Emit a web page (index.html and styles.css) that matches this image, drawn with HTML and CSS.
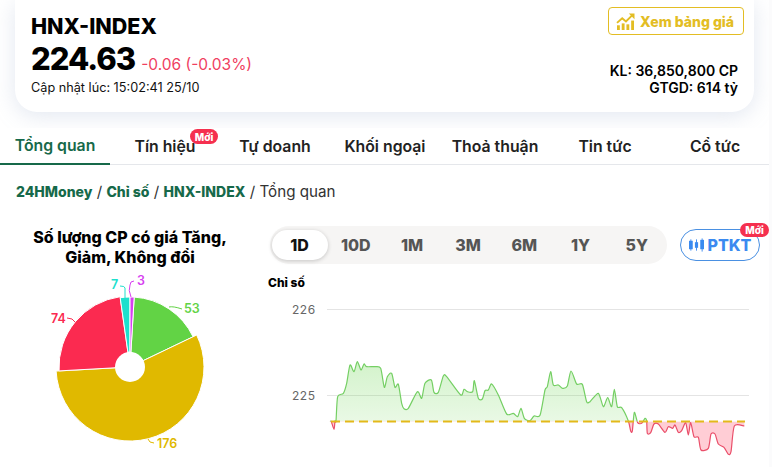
FILE: index.html
```html
<!DOCTYPE html>
<html lang="vi">
<head>
  <meta charset="UTF-8" />
  <title>HNX-INDEX - Tổng quan</title>
  <link rel="stylesheet" href="styles.css">
</head>
<body>
  <div class="page">
    <header class="top">
      <div class="card">
        <div class="card-left">
          <h1 class="symbol">HNX-INDEX</h1>
          <div class="price-row">
            <span class="price">224.63</span>
            <span class="change">-0.06 (-0.03%)</span>
          </div>
          <div class="updated">Cập nhật lúc: 15:02:41 25/10</div>
        </div>
        <div class="card-right">
          <a class="board-btn" href="#">
            <svg class="board-icon" viewBox="0 0 20 18" width="19" height="17">
              <rect x="1" y="13" width="3" height="5" />
              <rect x="6" y="11" width="3" height="7" />
              <rect x="11" y="12" width="3" height="6" />
              <rect x="16" y="8" width="3" height="10" />
              <path d="M1 10.5 L6.5 5.5 L10.5 9 L17 2.5" fill="none" stroke-width="2" />
              <path d="M13.5 0.5 H19.5 V6.5 Z" />
            </svg>
            Xem bảng giá
          </a>
          <div class="stats">
            <div>KL: 36,850,800 CP</div>
            <div>GTGD: 614 tỷ</div>
          </div>
        </div>
      </div>
    </header>

    <nav class="tabs">
      <a class="tab active" href="#">Tổng quan</a>
      <a class="tab" href="#">Tín hiệu<span class="badge badge-tab">Mới</span></a>
      <a class="tab" href="#">Tự doanh</a>
      <a class="tab" href="#">Khối ngoại</a>
      <a class="tab" href="#">Thoả thuận</a>
      <a class="tab" href="#">Tin tức</a>
      <a class="tab" href="#">Cổ tức</a>
    </nav>

    <div class="breadcrumb">
      <a href="#">24HMoney</a> / <a href="#">Chỉ số</a> / <a href="#">HNX-INDEX</a> / <span>Tổng quan</span>
    </div>

    <section class="content">
      <div class="pie-box">
        <h2 class="pie-title">Số lượng CP có giá Tăng, Giảm, Không đổi</h2>
        <svg class="pie" viewBox="0 268 260 199" width="260" height="199">
          <g stroke="#fff" stroke-width="1">
            <path fill="#62d345" d="M130.9 352 L134.2 297.1 A70 70 0 0 1 193.1 336.8 L143.5 360.5 Z" />
            <path fill="#e0b900" d="M143.5 360.5 L196.7 335 A74 74 0 1 1 56.1 371.1 L115 367.8 Z" />
            <path fill="#fb2a50" d="M115 367.8 L59.1 370.9 A71 71 0 0 1 120.1 296.7 L127.9 352.1 Z" />
            <path fill="#1de0cd" d="M127.9 352.1 L120.2 297.7 A70 70 0 0 1 130 297 V352 Z" />
            <path fill="#d63ff0" d="M130 352 V297 A70 70 0 0 1 134.2 297.1 L130.9 352 Z" />
          </g>
          <circle cx="130" cy="367" r="15" fill="#fff" />
          <g fill="none" stroke-width="1">
            <path stroke="#62d345" d="M169 307 Q173 306 182 309" />
            <path stroke="#e0b900" d="M148 439 Q149 443 154 443" />
            <path stroke="#fb2a50" d="M75 322 Q73 318 67 318" />
            <path stroke="#1de0cd" d="M125 298 V288 Q125 286 120 286" />
            <path stroke="#d63ff0" d="M131 297 Q128 290 130 285 Q130 281 134 281" />
          </g>
          <g class="pie-labels">
            <text x="184" y="313" fill="#62d345">53</text>
            <text x="157" y="448" fill="#e0b900">176</text>
            <text x="51" y="323" fill="#fb2a50">74</text>
            <text x="111" y="289" fill="#1de0cd">7</text>
            <text x="137" y="285" fill="#d63ff0">3</text>
          </g>
        </svg>
      </div>

      <div class="chart-box">
        <div class="chart-head">
          <div class="ranges">
            <button class="range active">1D</button>
            <button class="range">10D</button>
            <button class="range">1M</button>
            <button class="range">3M</button>
            <button class="range">6M</button>
            <button class="range">1Y</button>
            <button class="range">5Y</button>
          </div>
          <a class="ptkt" href="#">
            <svg viewBox="0 0 16 14" width="15" height="14" fill="#3b8af0">
              <rect x="0" y="2.5" width="4" height="9" />
              <rect x="1.5" y="1" width="1" height="12" />
              <rect x="6.3" y="4" width="3.4" height="6" />
              <rect x="7.5" y="1" width="1" height="12" />
              <rect x="12" y="1.5" width="4" height="10" />
              <rect x="13.5" y="0" width="1" height="14" />
            </svg>
            PTKT
            <span class="badge badge-ptkt">Mới</span>
          </a>
        </div>
        <div class="chart-title">Chỉ số</div>
        <svg class="chart" viewBox="268 295 502 172" width="502" height="172">
          <defs>
            <linearGradient id="upFill" x1="0" y1="0" x2="0" y2="1">
              <stop offset="0" stop-color="#62d345" stop-opacity="0.28" />
              <stop offset="1" stop-color="#62d345" stop-opacity="0.06" />
            </linearGradient>
            <clipPath id="above"><rect x="268" y="295" width="502" height="126.5" /></clipPath>
            <clipPath id="below"><rect x="268" y="421.5" width="502" height="46" /></clipPath>
          </defs>
          <g class="grid">
            <line x1="327" y1="309.5" x2="749" y2="309.5" />
            <line x1="327" y1="395.5" x2="749" y2="395.5" />
          </g>
          <g class="axis">
            <text x="292" y="314">226</text>
            <text x="292" y="400">225</text>
          </g>
          <path id="areaUp" fill="url(#upFill)" clip-path="url(#above)" />
          <path id="areaDown" fill="#ffc4ce" fill-opacity="0.85" clip-path="url(#below)" />
          <path id="lineUp" class="line" stroke="#74cf63" clip-path="url(#above)" />
          <path id="lineDown" class="line" stroke="#ea4f6a" clip-path="url(#below)" />
          <line class="base" x1="331" y1="421.5" x2="745" y2="421.5" />
        </svg>
      </div>
    </section>
  </div>
  <script src="script.js"></script>
</body>
</html>
```

FILE: styles.css
```css
* {
    margin: 0;
    padding: 0;
    box-sizing: border-box;
}

html, body {
    height: 467px;
    overflow: hidden;
}

body {
    font-family: 'Inter', 'Liberation Sans', sans-serif;
    background: #fbfbfc;
    color: #000;
}

a {
    color: inherit;
    text-decoration: none;
}

.page {
    width: 769px;
    height: 467px;
    background: #fff;
    overflow: hidden;
}

.top {
    height: 128px;
    padding: 0 15px;
    overflow: hidden;
}

.card {
    display: flex;
    justify-content: space-between;
    height: 112px;
    padding: 13px 16px 0;
    background: #fff;
    border-radius: 0 0 22px 22px;
    box-shadow: 0 4px 22px rgba(150, 170, 200, 0.28);
}

.symbol {
    font-size: 21.5px;
    line-height: 27px;
    font-weight: 800;
}

.price-row {
    display: flex;
    align-items: baseline;
    gap: 6px;
    margin-top: 1px;
}

.price {
    font-size: 31px;
    line-height: 36px;
    font-weight: 800;
    letter-spacing: -1px;
}

.change {
    font-size: 15.5px;
    color: #f0405f;
}

.updated {
    margin-top: 3px;
    font-size: 12.7px;
    line-height: 16px;
    color: #111;
}

.card-right {
    display: flex;
    flex-direction: column;
    align-items: flex-end;
    margin-top: -6px;
}

.board-btn {
    display: flex;
    align-items: center;
    gap: 5px;
    width: 136px;
    height: 28px;
    margin-right: -6px;
    padding-left: 7px;
    border: 1px solid #e3bd23;
    border-radius: 4px;
    font-size: 14px;
    font-weight: 800;
    color: #e3bd23;
}

.board-icon {
    fill: #e3bd23;
    stroke: #e3bd23;
    stroke-width: 0;
}

.board-icon path[fill="none"] {
    stroke-width: 2;
}

.stats {
    margin-top: 27px;
    text-align: right;
    font-size: 14px;
    line-height: 17px;
    font-weight: 600;
}

.tabs {
    display: grid;
    grid-template-columns: repeat(7, 110px);
    height: 37px;
    border-bottom: 1px solid #e5e7eb;
}

.tab {
    position: relative;
    display: flex;
    align-items: center;
    justify-content: center;
    height: 37px;
    font-size: 15.8px;
    font-weight: 600;
    color: #222;
}

.tab.active {
    color: #16694a;
    border-bottom: 2px solid #16694a;
}

.badge {
    position: absolute;
    display: flex;
    align-items: center;
    justify-content: center;
    background: #f5304f;
    color: #fff;
    font-size: 10px;
    font-weight: 800;
    border-radius: 8px;
}

.badge-tab {
    top: 1px;
    left: 80px;
    width: 28px;
    height: 15px;
}

.badge-ptkt {
    top: -7px;
    right: -10px;
    width: 29px;
    height: 14px;
}

.breadcrumb {
    padding: 18px 0 0 16px;
    height: 62px;
    font-size: 15.2px;
    line-height: 18px;
    color: #333;
}

.breadcrumb a {
    font-weight: 800;
    color: #16694a;
    font-size: 14px;
}

.content {
    display: flex;
}

.pie-box {
    width: 268px;
}

.pie-title {
    width: 260px;
    margin-top: 0;
    padding: 0 20px 1px;
    text-align: center;
    font-size: 16px;
    line-height: 20px;
    font-weight: 800;
}

.pie {
    display: block;
}

.pie-labels text {
    font-size: 12.5px;
    font-weight: 600;
}

.chart-box {
    width: 501px;
    margin-top: -1px;
}

.chart-head {
    display: flex;
    align-items: center;
    gap: 13px;
    margin-left: 2px;
}

.ranges {
    display: grid;
    grid-template-columns: repeat(7, 56.2px);
    align-items: center;
    width: 397px;
    height: 38px;
    padding: 0 1.5px;
    background: #f6f5f4;
    border-radius: 19px;
}

.range {
    height: 30px;
    border: none;
    background: none;
    border-radius: 15px;
    font-family: inherit;
    font-size: 16px;
    font-weight: 800;
    color: #555;
}

.range.active {
    background: #fff;
    color: #111;
    box-shadow: 0 1px 4px rgba(0, 0, 0, 0.2);
}

.ptkt {
    position: relative;
    display: flex;
    align-items: center;
    justify-content: center;
    gap: 4px;
    width: 80px;
    height: 32px;
    border: 1px solid #4a90e2;
    border-radius: 16px;
    font-size: 16px;
    font-weight: 800;
    color: #3b8af0;
}

.chart-title {
    margin-top: 11px;
    height: 20px;
    font-size: 12px;
    line-height: 16px;
    font-weight: 800;
}

.chart {
    display: block;
}

.grid line {
    stroke: #e4e4e4;
    stroke-width: 1;
}

.axis text {
    font-size: 12px;
    letter-spacing: 0.5px;
    fill: #666;
}

.line {
    fill: none;
    stroke-width: 1.2;
    stroke-linejoin: round;
}

.base {
    stroke: #e3b91a;
    stroke-width: 2;
    stroke-dasharray: 9 5;
}
```

FILE: script.js
```js
// [x, y] in page coordinates, read off the intraday series
const left = [[0,213],[4,215],[12,238],[15,213],[18,213],[23,140],[40,130],[50,100],[60,45],[72,65],[82,35],[93,60],[102,42],[110,50],[135,50],[152,55],[163,112],[172,80],[185,70],[195,112],[205,103],[215,160],[222,176],[235,175],[262,125],[275,145],[285,100],[304,90],[312,127],[325,127],[340,78],[350,80],[392,135],[402,118],[412,125],[428,125],[433,92],[445,145],[457,147],[465,122],[475,120],[485,102],[505,135],[530,192],[550,190],[563,200],[573,175],[583,205],[600,212],[612,198],[630,196]]
  .map(p => [330 + p[0] / 3, 350 + p[1] / 3]);

const right = [[15,90],[22,80],[32,35],[40,75],[55,75],[68,85],[82,78],[93,33],[110,72],[127,73],[140,125],[150,125],[175,100],[190,140],[203,113],[215,140],[223,88],[232,140],[245,143],[265,183],[272,213],[277,213],[283,157],[293,188],[305,190],[315,175],[320,183],[322,220],[332,218],[342,192],[355,192],[375,217],[385,200],[398,205],[405,195],[415,217],[425,212],[437,188],[445,225],[452,188],[462,230],[475,232],[483,270],[505,265],[513,222],[525,222],[535,252],[552,262],[565,283],[573,275],[583,198],[613,198]]
  .map(p => [540 + p[0] / 3, 360 + p[1] / 3]);

const points = left.concat(right);
const baseY = 421.5;

function smoothPath(pts) {
  let d = `M${pts[0][0]} ${pts[0][1]}`;
  for (let i = 0; i < pts.length - 1; i++) {
    const p0 = pts[i - 1] || pts[i];
    const p1 = pts[i];
    const p2 = pts[i + 1];
    const p3 = pts[i + 2] || p2;
    const c1x = p1[0] + (p2[0] - p0[0]) / 8;
    const c1y = p1[1] + (p2[1] - p0[1]) / 8;
    const c2x = p2[0] - (p3[0] - p1[0]) / 8;
    const c2y = p2[1] - (p3[1] - p1[1]) / 8;
    d += ` C${c1x} ${c1y} ${c2x} ${c2y} ${p2[0]} ${p2[1]}`;
  }
  return d;
}

const line = smoothPath(points);
const area = `${line} L${points[points.length - 1][0]} ${baseY} L${points[0][0]} ${baseY} Z`;

document.getElementById('lineUp').setAttribute('d', line);
document.getElementById('lineDown').setAttribute('d', line);
document.getElementById('areaUp').setAttribute('d', area);
document.getElementById('areaDown').setAttribute('d', area);
```
